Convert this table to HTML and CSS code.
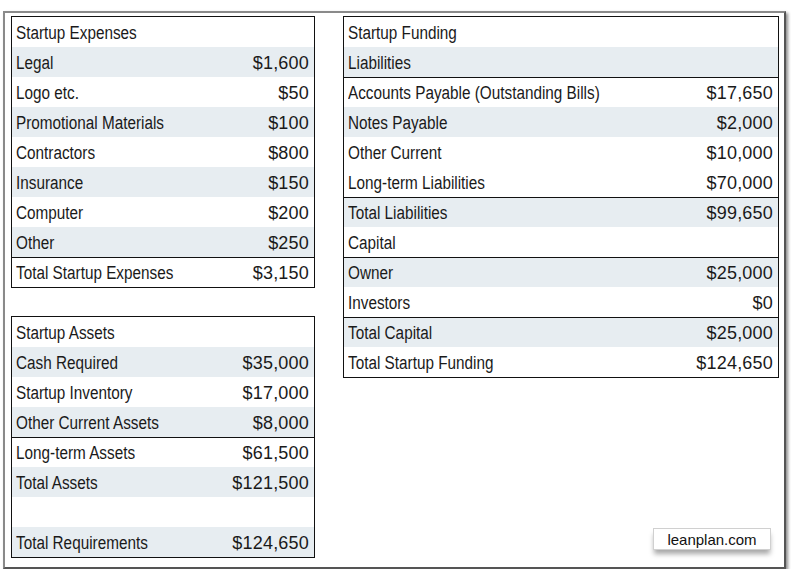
FILE: index.html
```html
<!DOCTYPE html>
<html>
<head>
<meta charset="utf-8">
<link rel="stylesheet" href="styles.css">
</head>
<body>
<div class="frame">
  <div class="col col-left">
    <div class="tbl">
      <div class="row"><span class="lbl">Startup Expenses</span></div>
      <div class="row shade"><span class="lbl">Legal</span><span class="val">$1,600</span></div>
      <div class="row"><span class="lbl">Logo etc.</span><span class="val">$50</span></div>
      <div class="row shade"><span class="lbl">Promotional Materials</span><span class="val">$100</span></div>
      <div class="row"><span class="lbl">Contractors</span><span class="val">$800</span></div>
      <div class="row shade"><span class="lbl">Insurance</span><span class="val">$150</span></div>
      <div class="row"><span class="lbl">Computer</span><span class="val">$200</span></div>
      <div class="row shade"><span class="lbl">Other</span><span class="val">$250</span></div>
      <div class="row sep"><span class="lbl">Total Startup Expenses</span><span class="val">$3,150</span></div>
    </div>
    <div class="tbl">
      <div class="row"><span class="lbl">Startup Assets</span></div>
      <div class="row shade"><span class="lbl">Cash Required</span><span class="val">$35,000</span></div>
      <div class="row"><span class="lbl">Startup Inventory</span><span class="val">$17,000</span></div>
      <div class="row shade"><span class="lbl">Other Current Assets</span><span class="val">$8,000</span></div>
      <div class="row sep"><span class="lbl">Long-term Assets</span><span class="val">$61,500</span></div>
      <div class="row shade"><span class="lbl">Total Assets</span><span class="val">$121,500</span></div>
      <div class="row"></div>
      <div class="row shade"><span class="lbl">Total Requirements</span><span class="val">$124,650</span></div>
    </div>
  </div>
  <div class="col col-right">
    <div class="tbl">
      <div class="row"><span class="lbl">Startup Funding</span></div>
      <div class="row shade"><span class="lbl">Liabilities</span></div>
      <div class="row sep"><span class="lbl">Accounts Payable (Outstanding Bills)</span><span class="val">$17,650</span></div>
      <div class="row shade"><span class="lbl">Notes Payable</span><span class="val">$2,000</span></div>
      <div class="row"><span class="lbl">Other Current</span><span class="val">$10,000</span></div>
      <div class="row"><span class="lbl">Long-term Liabilities</span><span class="val">$70,000</span></div>
      <div class="row shade sep"><span class="lbl">Total Liabilities</span><span class="val">$99,650</span></div>
      <div class="row"><span class="lbl">Capital</span></div>
      <div class="row shade sep"><span class="lbl">Owner</span><span class="val">$25,000</span></div>
      <div class="row"><span class="lbl">Investors</span><span class="val">$0</span></div>
      <div class="row shade sep"><span class="lbl">Total Capital</span><span class="val">$25,000</span></div>
      <div class="row"><span class="lbl">Total Startup Funding</span><span class="val">$124,650</span></div>
    </div>
    <div class="badge">leanplan.com</div>
  </div>
</div>
</body>
</html>
```

FILE: styles.css
```css
html, body {
  margin: 0;
  padding: 0;
  background: #ffffff;
}

body {
  font-family: "Liberation Sans", Arial, sans-serif;
  color: #1a1a1a;
}

.frame {
  box-sizing: border-box;
  margin: 11px 0 0 3px;
  width: 783px;
  height: 558px;
  border: 2px solid #8a8a8a;
  border-right-color: #555;
  border-bottom-color: #555;
  box-shadow: 2px 2px 3px rgba(0, 0, 0, 0.45);
  padding: 3px 0 0 6px;
  display: flex;
  gap: 28px;
  background: #fff;
}

.col {
  display: flex;
  flex-direction: column;
}

.col-left {
  width: 304px;
  gap: 28px;
}

.col-right {
  width: 436px;
}

.tbl {
  border: 1px solid #111;
  background: #fff;
}

.row {
  box-sizing: border-box;
  height: 30px;
  display: flex;
  align-items: center;
  justify-content: space-between;
  padding: 2px 5px 0 4px;
}

.row.shade {
  background: #e7edf1;
}

.row.sep {
  border-top: 1px solid #111;
}

.lbl {
  display: inline-block;
  font-size: 18px;
  white-space: nowrap;
  transform: scaleX(0.85);
  transform-origin: left center;
}

.val {
  font-size: 18px;
  letter-spacing: 0.2px;
  white-space: nowrap;
}

.badge {
  margin-top: auto;
  margin-bottom: 17px;
  align-self: flex-end;
  margin-right: 8px;
  width: 118px;
  height: 22px;
  box-sizing: border-box;
  border: 1px solid #d0d0d0;
  background: #fff;
  box-shadow: 0 5px 5px -1px rgba(0, 0, 0, 0.35);
  font-size: 15px;
  display: flex;
  align-items: center;
  justify-content: center;
  color: #111;
}
```
